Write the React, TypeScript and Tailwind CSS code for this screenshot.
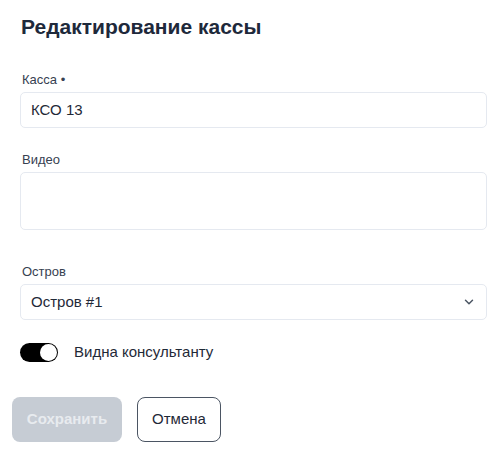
import React from "react";

export default function App() {
  return (
    <div className="w-[500px] h-[451px] bg-white pl-[20px] pr-[13px] pt-[14px] font-['Liberation_Sans',Arial,sans-serif]">
      <h1 className="text-[21px] leading-[26px] font-bold text-[#1e293b] pl-px">Редактирование кассы</h1>

      <div className="mt-[32px]">
        <div className="text-[13px] leading-[16px] text-[#374151] pl-[2px]">Касса •</div>
        <div className="mt-[4px] h-[36px] border border-[#e5e9f0] rounded-[5px] flex items-center px-[10px] text-[15px] text-[#1f2937]">
          КСО 13
        </div>
      </div>

      <div className="mt-[24px]">
        <div className="text-[13px] leading-[16px] text-[#374151] pl-[2px]">Видео</div>
        <div className="mt-[4px] h-[58px] border border-[#e5e9f0] rounded-[5px]" />
      </div>

      <div className="mt-[34px]">
        <div className="text-[13px] leading-[16px] text-[#374151] pl-[2px]">Остров</div>
        <div className="mt-[4px] h-[36px] border border-[#e5e9f0] rounded-[5px] flex items-center justify-between pl-[10px] pr-[10px] text-[15px] text-[#1f2937]">
          <span>Остров #1</span>
          <svg width="14" height="14" viewBox="0 0 24 24" fill="none" stroke="#4b5563" strokeWidth="2.5" strokeLinecap="round" strokeLinejoin="round">
            <path d="M6 9l6 6 6-6" />
          </svg>
        </div>
      </div>

      <div className="mt-[21px] flex items-center">
        <div className="w-[38px] h-[19px] rounded-full bg-black flex items-center justify-end pr-[1px]">
          <div className="w-[17px] h-[17px] rounded-full bg-white" />
        </div>
        <span className="ml-[16px] text-[15px] text-[#1f2937]">Видна консультанту</span>
      </div>

      <div className="mt-[33px] -ml-[8px] flex gap-[15px]">
        <button className="h-[45px] w-[110px] rounded-[8px] bg-[#c6ccd4] text-[#e8ebef] font-bold text-[15px]">Сохранить</button>
        <button className="h-[45px] w-[84px] rounded-[8px] border border-[#4b5563] text-[#1f2937] text-[15px]">Отмена</button>
      </div>
    </div>
  );
}
